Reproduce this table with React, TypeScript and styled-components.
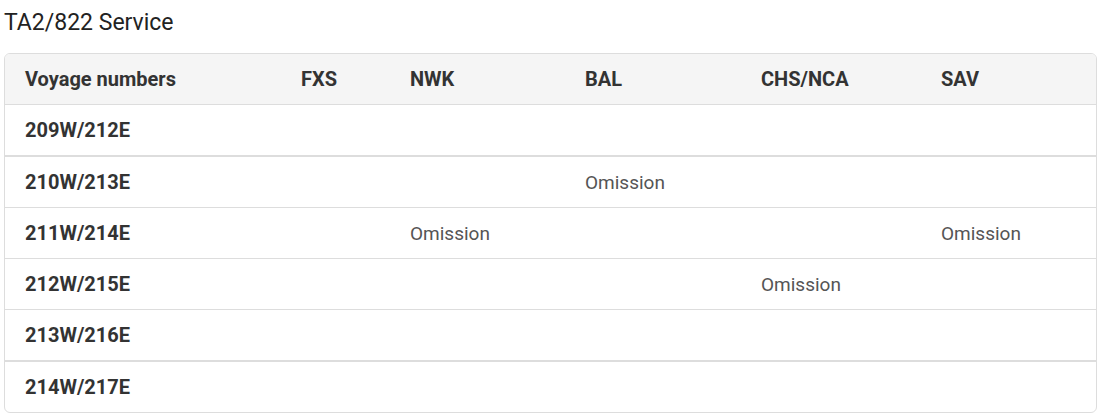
import React from "react";
import styled, { createGlobalStyle } from "styled-components";

const Global = createGlobalStyle`
  html, body { margin: 0; padding: 0; background: #fff; }
  body { font-family: "Roboto", "Noto Sans", sans-serif; color: #333; }
  *, *::before, *::after { box-sizing: border-box; }
`;

const Page = styled.div`
  padding: 0 6px 0 4px;
`;

const Title = styled.h2`
  margin: 0;
  padding-top: 9px;
  height: 53px;
  font-size: 23px;
  font-weight: 400;
  color: #222;
  line-height: 28px;
`;

const Table = styled.div`
  border: 1px solid #ddd;
  border-radius: 6px;
  overflow: hidden;
`;

const cols = "276px 109px 175px 176px 180px 1fr";

const HeadRow = styled.div`
  display: grid;
  grid-template-columns: ${cols};
  height: 50px;
  align-items: center;
  background: #f5f5f5;
`;

const Row = styled.div<{ $thick?: boolean }>`
  display: grid;
  grid-template-columns: ${cols};
  height: ${(p) => (p.$thick ? 52 : 51)}px;
  align-items: center;
  border-top: ${(p) => (p.$thick ? 2 : 1)}px solid #ddd;
`;

const HeadCell = styled.div`
  padding-left: 20px;
  font-size: 20px;
  font-weight: 700;
  color: #333;
`;

const LabelCell = styled.div`
  padding-left: 20px;
  font-size: 20px;
  font-weight: 700;
  color: #333;
`;

const Cell = styled.div`
  padding-left: 20px;
  font-size: 19px;
  font-weight: 400;
  color: #555;
`;

const headers = ["Voyage numbers", "FXS", "NWK", "BAL", "CHS/NCA", "SAV"];

const rows: { label: string; cells: string[]; thick?: boolean }[] = [
  { label: "209W/212E", cells: ["", "", "", "", ""] },
  { label: "210W/213E", cells: ["", "", "Omission", "", ""], thick: true },
  { label: "211W/214E", cells: ["", "Omission", "", "", "Omission"] },
  { label: "212W/215E", cells: ["", "", "", "Omission", ""] },
  { label: "213W/216E", cells: ["", "", "", "", ""] },
  { label: "214W/217E", cells: ["", "", "", "", ""], thick: true },
];

export default function App() {
  return (
    <Page>
      <Global />
      <Title>TA2/822 Service</Title>
      <Table>
        <HeadRow>
          {headers.map((h) => (
            <HeadCell key={h}>{h}</HeadCell>
          ))}
        </HeadRow>
        {rows.map((r) => (
          <Row key={r.label} $thick={r.thick}>
            <LabelCell>{r.label}</LabelCell>
            {r.cells.map((c, i) => (
              <Cell key={i}>{c}</Cell>
            ))}
          </Row>
        ))}
      </Table>
    </Page>
  );
}
